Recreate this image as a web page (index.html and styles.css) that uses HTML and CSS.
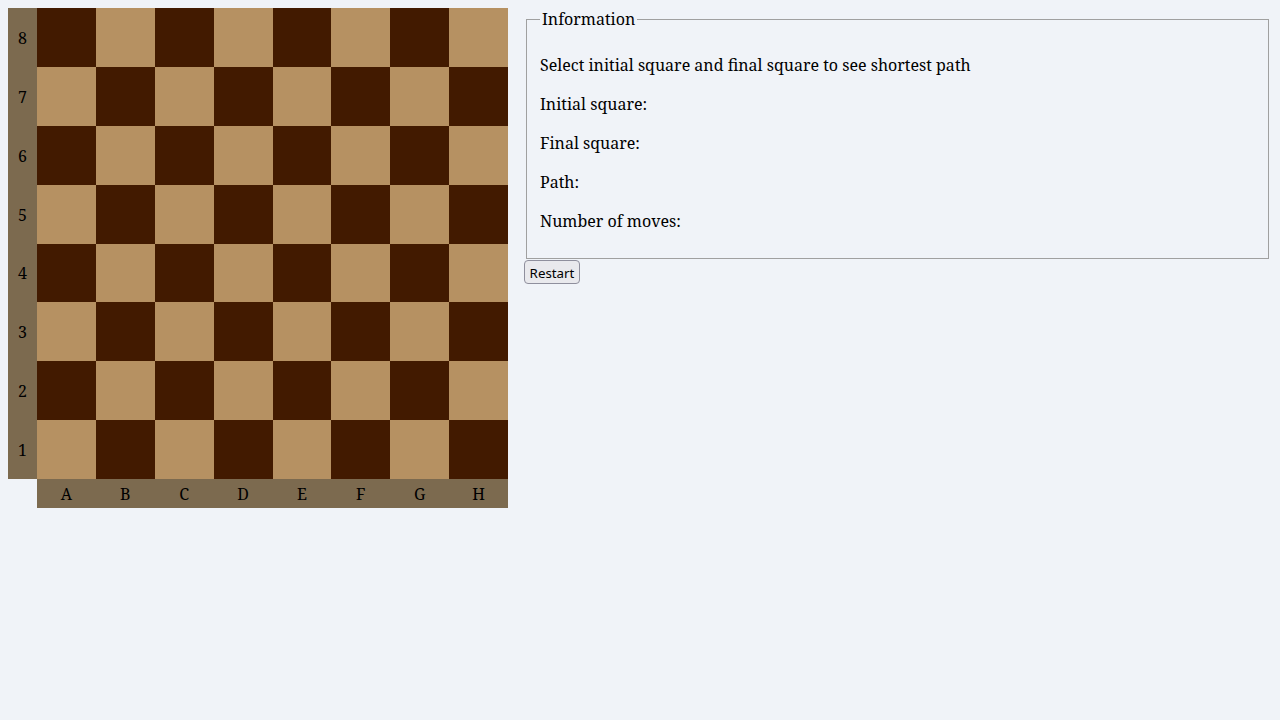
FILE: index.html
```html
<!DOCTYPE html>
<html>
<head>
<meta charset="utf-8">
<link rel="stylesheet" href="styles.css">
</head>
<body>
<div class="page">
  <div class="board">
    <div class="rank">8</div><div class="sq d"></div><div class="sq l"></div><div class="sq d"></div><div class="sq l"></div><div class="sq d"></div><div class="sq l"></div><div class="sq d"></div><div class="sq l"></div>
    <div class="rank">7</div><div class="sq l"></div><div class="sq d"></div><div class="sq l"></div><div class="sq d"></div><div class="sq l"></div><div class="sq d"></div><div class="sq l"></div><div class="sq d"></div>
    <div class="rank">6</div><div class="sq d"></div><div class="sq l"></div><div class="sq d"></div><div class="sq l"></div><div class="sq d"></div><div class="sq l"></div><div class="sq d"></div><div class="sq l"></div>
    <div class="rank">5</div><div class="sq l"></div><div class="sq d"></div><div class="sq l"></div><div class="sq d"></div><div class="sq l"></div><div class="sq d"></div><div class="sq l"></div><div class="sq d"></div>
    <div class="rank">4</div><div class="sq d"></div><div class="sq l"></div><div class="sq d"></div><div class="sq l"></div><div class="sq d"></div><div class="sq l"></div><div class="sq d"></div><div class="sq l"></div>
    <div class="rank">3</div><div class="sq l"></div><div class="sq d"></div><div class="sq l"></div><div class="sq d"></div><div class="sq l"></div><div class="sq d"></div><div class="sq l"></div><div class="sq d"></div>
    <div class="rank">2</div><div class="sq d"></div><div class="sq l"></div><div class="sq d"></div><div class="sq l"></div><div class="sq d"></div><div class="sq l"></div><div class="sq d"></div><div class="sq l"></div>
    <div class="rank">1</div><div class="sq l"></div><div class="sq d"></div><div class="sq l"></div><div class="sq d"></div><div class="sq l"></div><div class="sq d"></div><div class="sq l"></div><div class="sq d"></div>
    <div class="corner"></div><div class="file">A</div><div class="file">B</div><div class="file">C</div><div class="file">D</div><div class="file">E</div><div class="file">F</div><div class="file">G</div><div class="file">H</div>
  </div>
  <div class="info">
    <fieldset class="panel">
      <legend>Information</legend>
      <p>Select initial square and final square to see shortest path</p>
      <p>Initial square:</p>
      <p>Final square:</p>
      <p>Path:</p>
      <p>Number of moves:</p>
    </fieldset>
    <div class="actions"><button class="restart">Restart</button></div>
  </div>
</div>
</body>
</html>
```
FILE: styles.css
```css
body {
  margin: 8px;
  background: #f0f3f8;
  font-family: "Noto Serif", serif;
  font-size: 16px;
  line-height: 23px;
  color: #000;
}
.page {
  display: flex;
  align-items: flex-start;
  gap: 16px;
}
.board {
  display: grid;
  grid-template-columns: 29px repeat(8, 1fr);
  grid-template-rows: repeat(8, 1fr) 29px;
  width: 500px;
  height: 500px;
  flex: none;
}
.sq.d { background: #421a00; }
.sq.l { background: #b69162; }
.rank, .file {
  background: #7c6a4f;
  display: flex;
  align-items: center;
  justify-content: center;
  padding-top: 2px;
}
.info {
  flex: 1;
}
.panel {
  margin: 0 3px 0 2px;
  padding: 7px 13px 9px;
  border: 1px solid #a0a0a0;
}
.panel legend { padding: 0 2px; }
.panel p { margin: 16px 0; }
.actions { line-height: normal; padding-top: 1px; }
.restart {
  font-family: "Noto Sans", sans-serif;
  font-size: 13.33px;
  line-height: 18px;
  background: #e9e9ed;
  color: #000;
  border: 1px solid #8f8f9d;
  border-radius: 4px;
  padding: 3px 4px 1px;
  width: 56px;
  height: 24px;
}
```
